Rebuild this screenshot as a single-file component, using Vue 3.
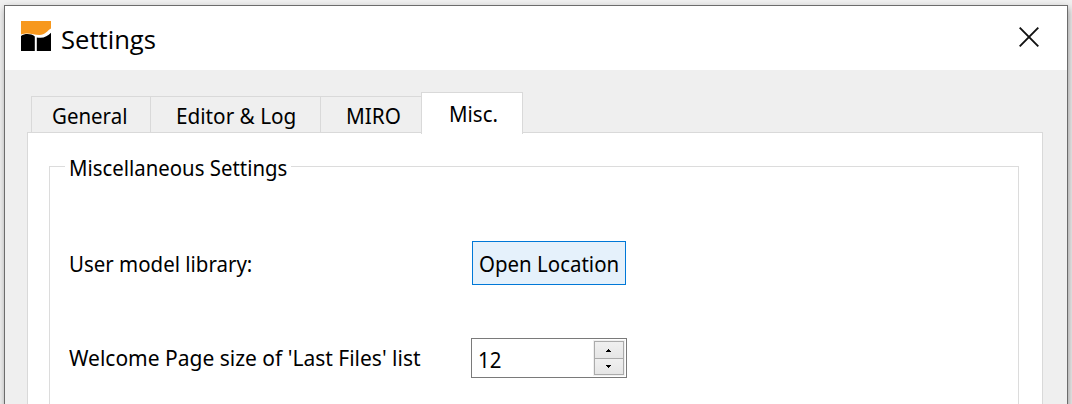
<script setup>
import { ref } from 'vue'

const tabs = [
  { id: 'general', label: 'General' },
  { id: 'editor', label: 'Editor & Log' },
  { id: 'miro', label: 'MIRO' },
  { id: 'misc', label: 'Misc.' },
]
const active = ref('misc')
const size = ref(12)
</script>

<template>
  <div class="desktop">
    <div class="window">
      <header class="titlebar">
        <svg class="logo" width="30" height="30" viewBox="0 0 30 30">
          <path fill="#f7981d" d="M0 0H30V7.5C26.5 9.5 24 13.8 18.5 14C12 14 8.5 10.8 0 13.4Z" />
          <path fill="#000" d="M0 15C4 12.2 10 12.6 13.8 15.4V30H0Z" />
          <path fill="#000" d="M15.8 16.4C22 17.8 26.5 15.5 30 11.8V30H15.8Z" />
        </svg>
        <h1 class="title"><span class="fit">Settings</span></h1>
        <svg class="close" width="20" height="20" viewBox="0 0 20 20">
          <path d="M.7.7 19.3 19.3M19.3.7.7 19.3" stroke="#111" stroke-width="1.9" fill="none" />
        </svg>
      </header>
      <nav class="tabs">
        <div
          v-for="tab in tabs"
          :key="tab.id"
          class="tab"
          :class="[tab.id, { active: active === tab.id }]"
          @click="active = tab.id"
        ><span class="fit">{{ tab.label }}</span></div>
      </nav>
      <main class="panel">
        <section class="group">
          <div class="legend"><span class="fit">Miscellaneous Settings</span></div>
          <div class="row library">
            <label><span class="fit">User model library:</span></label>
            <button class="open"><span class="fit">Open Location</span></button>
          </div>
          <div class="row recent">
            <label><span class="fit">Welcome Page size of 'Last Files' list</span></label>
            <div class="spinbox">
              <span class="value"><span class="fit">{{ size }}</span></span>
              <div class="steps">
                <div class="step" @click="size++">
                  <svg width="5" height="3" viewBox="0 0 5 3" shape-rendering="crispEdges"><path d="M2 0h1v1h1v1h1v1H0V2h1V1h1z" /></svg>
                </div>
                <div class="step" @click="size--">
                  <svg width="5" height="3" viewBox="0 0 5 3" shape-rendering="crispEdges"><path d="M0 0h5v1H4v1H3v1H2V2H1V1H0z" /></svg>
                </div>
              </div>
            </div>
          </div>
        </section>
      </main>
    </div>
  </div>
</template>

<style>
html, body { margin: 0; overflow: hidden; }
</style>

<style scoped>
* { box-sizing: border-box; }
.desktop {
  width: 1072px;
  height: 404px;
  padding: 5px 4px 0;
  overflow: hidden;
  background: #f0f0f0;
  font: 22px/30px "Noto Sans", sans-serif;
  color: #000;
}
.window {
  width: 1064px;
  height: 420px;
  border: 1px solid #6c6c6c;
  background: #efefef;
  box-shadow: 1px 3px 7px rgba(0, 0, 0, .36);
}
.fit { display: inline-block; white-space: nowrap; transform: scaleX(.93); transform-origin: 0 50%; }
.titlebar {
  display: flex;
  height: 64px;
  padding: 15px 28px 0 16px;
  background: #fff;
}
.logo { flex: none; }
.title {
  margin: 0 auto 0 9.5px;
  font: 400 26px/36px "Open Sans", sans-serif;
}
.title .fit { transform: scaleX(.985); }
.close { flex: none; margin-top: 6px; }
.tabs {
  position: relative;
  z-index: 1;
  display: flex;
  align-items: flex-end;
  height: 63px;
  padding-left: 26px;
}
.tab {
  height: 36px;
  margin-bottom: 1px;
  padding-top: 3px;
  border: 1px solid #d9d9d9;
  border-right: 0;
  border-bottom: 0;
}
.general { width: 119px; padding-left: 19.5px; }
.editor { width: 170px; padding-left: 25px; }
.editor .fit, .miro .fit { transform: scaleX(.942); }
.miro { width: 101px; padding-left: 24.5px; }
.misc { width: 102px; padding-left: 27px; }
.tab.active { height: 42px; margin-bottom: -1px; padding-top: 5px; border-right: 1px solid #d9d9d9; background: #fff; }
.panel {
  width: 1016px;
  height: 300px;
  margin: -1px 0 0 22px;
  padding: 33px 23px 0 21px;
  border: 1px solid #d9d9d9;
  background: #fff;
}
.group { width: 970px; height: 280px; border: 1px solid #dcdcdc; }
.legend {
  width: 226px;
  height: 30px;
  margin: -15px 0 0 15px;
  padding-left: 4px;
  background: #fff;
}
.legend .fit { transform: scaleX(.926); }
.row { display: flex; align-items: center; padding-left: 19px; }
.row label { flex: none; }
.library { height: 44px; margin-top: 59px; }
.library label { width: 403px; }
.open {
  width: 154px;
  height: 44px;
  padding: 0 0 0 6px;
  border: 1px solid #0078d7;
  background: #e5f1fb;
  font: inherit;
  color: inherit;
  text-align: left;
}
.recent { height: 40px; margin-top: 53px; }
.recent label { width: 402px; padding-bottom: 2px; }
.recent label .fit { transform: scaleX(.954); }
.spinbox {
  display: flex;
  justify-content: space-between;
  width: 156px;
  height: 40px;
  padding: 2px 2px 2px 6px;
  border: 1px solid #7a7a7a;
}
.value { padding-top: 3px; }
.steps { width: 30px; height: 34px; border: 1px solid #ababab; outline: 1px solid #f0f0f0; }
.step {
  display: flex;
  align-items: center;
  justify-content: center;
  height: 16px;
  padding-right: 1px;
  background: linear-gradient(#f0f0f0, #e6e6e6);
}
.step:first-child { padding-top: 1px; }
.step + .step { border-top: 1px solid #ababab; }
</style>
